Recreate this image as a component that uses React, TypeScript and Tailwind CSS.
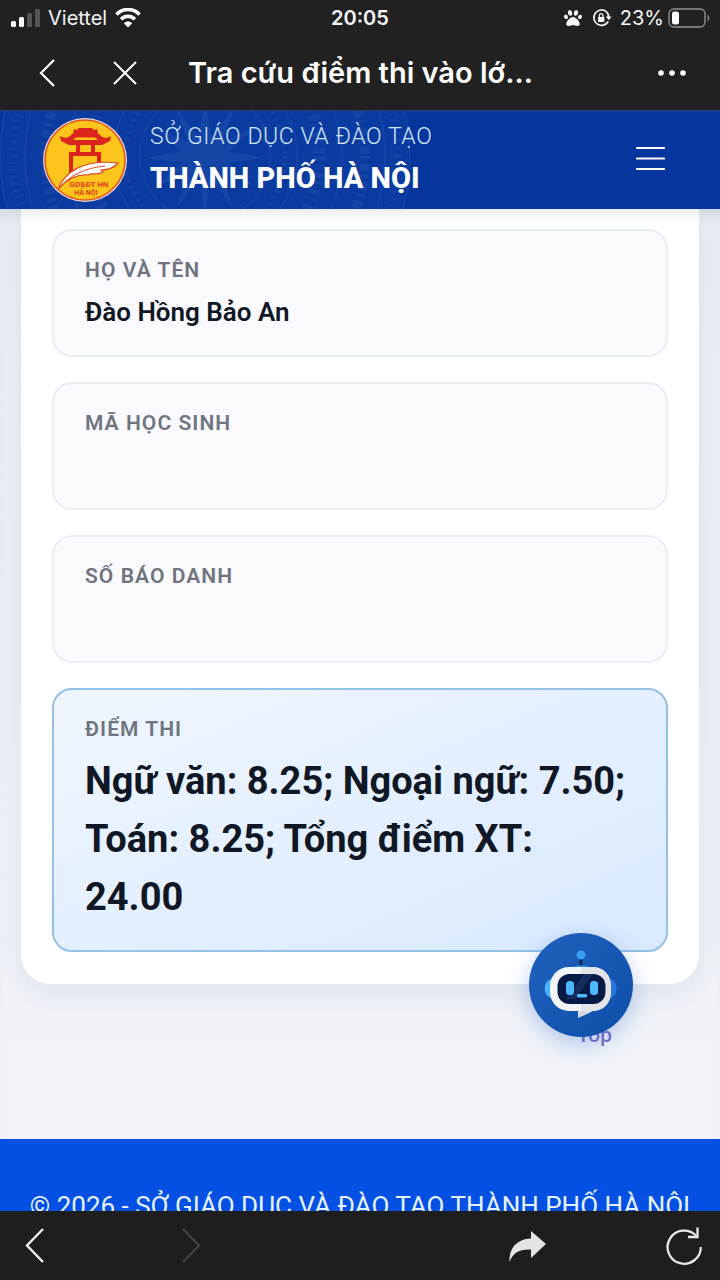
import type { ReactNode } from "react";
import { FaPaw } from "react-icons/fa";

const fields = [
  { label: "HỌ VÀ TÊN", value: "Đào Hồng Bảo An" },
  { label: "MÃ HỌC SINH", value: "" },
  { label: "SỐ BÁO DANH", value: "" },
];

function StatusBar() {
  return (
    <div className="grid h-9 shrink-0 grid-cols-3 items-center px-[10px] font-['Inter',sans-serif] text-xl text-gray-100">
      <div className="flex items-center gap-2">
        <svg width="30" height="20" viewBox="0 0 30 20" aria-hidden="true">
          <rect x="1" y="13" width="5" height="6" rx="1.5" fill="#fff" />
          <rect x="9" y="9" width="5" height="10" rx="1.5" fill="#fff" />
          <rect x="17" y="5" width="5" height="14" rx="1.5" fill="#555" />
          <rect x="25" y="1" width="5" height="18" rx="1.5" fill="#555" />
        </svg>
        <span>Viettel</span>
        <svg width="26" height="20" viewBox="0 0 26 20" fill="none" aria-hidden="true">
          <path d="M1.5 6.5C8 -0.2 18 -0.2 24.5 6.5" stroke="#fff" strokeWidth="3.6" />
          <path d="M6 11.2C10 7.2 16 7.2 20 11.2" stroke="#fff" strokeWidth="3.4" />
          <path d="M13 19.5L8.8 15.2C11 12.9 15 12.9 17.2 15.2Z" fill="#fff" />
        </svg>
      </div>
      <span className="text-center font-semibold">20:05</span>
      <div className="flex items-center justify-end gap-1">
        <FaPaw className="mr-1.5 size-[18px]" />
        <svg className="mr-1" width="20" height="20" viewBox="0 0 20 20" fill="none" stroke="#f3f4f6" aria-hidden="true">
          <path d="M14.3 3.6A7.7 7.7 0 1 0 16.2 13.5M14 3.4A7.7 7.7 0 0 1 16.7 9" strokeWidth="1.7" />
          <path d="M13.8 8.5H19.6L16.7 12.2Z" fill="#f3f4f6" stroke="none" />
          <rect x="6" y="9" width="6.4" height="5" rx="0.8" fill="#f3f4f6" stroke="none" />
          <path d="M7.4 9V7.4a1.8 1.8 0 0 1 3.6 0V9" strokeWidth="1.3" />
        </svg>
        <span>23%</span>
        <svg width="42" height="20" viewBox="0 0 42 20" aria-hidden="true">
          <rect x="1" y="1" width="36" height="18" rx="5" fill="none" stroke="#777" strokeWidth="1.8" />
          <rect x="4" y="3.5" width="7" height="13" rx="2.5" fill="#fff" />
          <path d="M39.5 6.5c2.6 1 2.6 6 0 7z" fill="#777" />
        </svg>
      </div>
    </div>
  );
}

function TitleBar() {
  return (
    <div className="flex h-[74px] shrink-0 items-center pr-[34px] pl-[39px]">
      <button type="button" aria-label="Quay lại" className="mr-[57px]">
        <svg width="17" height="28" viewBox="0 0 17 28" fill="none" stroke="#fff" strokeWidth="2.2">
          <path d="M15 1L2 14L15 27" />
        </svg>
      </button>
      <button type="button" aria-label="Đóng" className="mr-[51px]">
        <svg width="24" height="24" viewBox="0 0 24 24" fill="none" stroke="#fff" strokeWidth="2">
          <path d="M1 1L23 23M23 1L1 23" />
        </svg>
      </button>
      <h1 className="flex-1 truncate font-['Inter',sans-serif] text-[29px] font-semibold text-white">
        Tra cứu điểm thi vào lớ...
      </h1>
      <button type="button" aria-label="Thêm">
        <svg width="28" height="6" viewBox="0 0 28 6" fill="#fff">
          <circle cx="3" cy="3" r="2.8" />
          <circle cx="14" cy="3" r="2.8" />
          <circle cx="25" cy="3" r="2.8" />
        </svg>
      </button>
    </div>
  );
}

// Faint bronze drum behind the department name
function DrumPattern() {
  return (
    <svg
      className="absolute top-0 left-0 h-full w-[410px]"
      viewBox="0 0 410 98"
      fill="none"
      stroke="#6d95e0"
      strokeOpacity="0.1"
      aria-hidden="true"
    >
      <circle cx="205" cy="45" r="205" fill="#6d95e0" fillOpacity="0.06" strokeWidth="2" />
      <circle cx="205" cy="45" r="192" strokeWidth="8" strokeDasharray="2 5" />
      <circle cx="205" cy="45" r="180" strokeWidth="2" />
      <circle cx="205" cy="45" r="160" strokeWidth="10" strokeDasharray="3 5 7 4" />
      <circle cx="205" cy="45" r="137" strokeWidth="2" />
      <circle cx="205" cy="45" r="115" strokeWidth="12" strokeDasharray="5 4 2 6" />
      <circle cx="205" cy="45" r="92" strokeWidth="2" />
      <circle cx="205" cy="45" r="80" strokeWidth="5" strokeDasharray="3 4" />
      <circle cx="205" cy="45" r="65" strokeWidth="2" />
      <path
        d="M205 -10L211 27L234 -3L221 32L255 17L227 41L262 47L226 51L252 74L220 60L232 95L210 65L205 101L200 65L178 95L190 60L158 74L184 51L148 47L183 41L155 17L189 32L176 -3L199 27Z"
        fill="#6d95e0"
        fillOpacity="0.1"
      />
    </svg>
  );
}

function Emblem() {
  return (
    <svg width="84" height="84" viewBox="0 0 84 84" className="shrink-0" aria-hidden="true">
      <circle cx="42" cy="42" r="42" fill="#e9d7df" />
      <circle cx="42" cy="42" r="40" fill="#fdc51b" stroke="#e2571c" strokeWidth="1.6" />
      <g fill="#db251c">
        <path d="M30 16l1-5 3 1 2-2h13l2 2 3-1 1 5z" />
        <path d="M17 18c5 3 9 2 12-2h27c3 4 7 5 12 2l-1 5-8 4H26l-8-4z" />
        <path d="M33 26h4v8h-4zM48 26h4v8h-4z" />
        <path d="M26 34h32v11h-4v-7H30v20h-4z" />
      </g>
      <path d="M33 19.500h19l3 2.500H30z" fill="#fdc51b" />
      <path d="M15 71C22 54 40 41 75 45C70 51 63 52 58 52L60 54C54 58 49 54 45 57C35 56 25 60 15 71z" fill="#fff" stroke="#dd4a25" strokeWidth="1.2" />
      <path d="M15 71C27 57 42 50 62 48" fill="none" stroke="#dd4a25" strokeWidth="1" />
      <g fill="#dd3d1d" fontFamily="Roboto, sans-serif" fontWeight="700" textAnchor="middle">
        <text x="46" y="69" fontSize="8">GD&amp;ĐT HN</text>
        <text x="43" y="77" fontSize="7">HÀ NỘI</text>
      </g>
    </svg>
  );
}

function SiteHeader() {
  return (
    <header className="relative z-10 flex h-[99px] shrink-0 items-center overflow-hidden border-t border-[#34406b] bg-[#06369d] pr-[55px] pl-[43px]">
      <DrumPattern />
      <a href="#" className="relative flex flex-1 items-center gap-[23px]">
        <Emblem />
        <span className="flex flex-col pb-1">
          <span className="text-[23px] leading-10 font-light tracking-wide text-[#cfe6ff]">SỞ GIÁO DỤC VÀ ĐÀO TẠO</span>
          <span className="text-[29px] leading-[42px] font-extrabold text-white">THÀNH PHỐ HÀ NỘI</span>
        </span>
      </a>
      <button type="button" aria-label="Menu" className="pb-1">
        <svg width="29" height="25" viewBox="0 0 29 25" stroke="#fff" strokeWidth="2.2" strokeLinecap="round">
          <path d="M1 2h27M1 12.5h27M1 23h27" />
        </svg>
      </button>
    </header>
  );
}

function Field({ label, children }: { label: string; children: ReactNode }) {
  return (
    <div className="rounded-[20px] border-2 border-[#e9eef4] bg-[#f9f9fe] px-[31px] py-6">
      <dt className="text-[21px] leading-[30px] font-semibold tracking-wider text-[#70747e]">{label}</dt>
      <dd className="mt-2 min-h-[38px] text-[26px] leading-[38px] font-semibold text-[#101725]">{children}</dd>
    </div>
  );
}

function ChatBot() {
  return (
    <div className="fixed right-[87px] bottom-[243px] size-26">
      <a href="#" className="absolute right-[21px] -bottom-[10px] text-[21px] leading-6 font-medium text-[#7771c9]">
        Top
      </a>
      <button
        type="button"
        aria-label="Trợ lý ảo"
        className="relative flex size-26 items-center justify-center rounded-full bg-linear-to-br from-[#1f62bd] to-[#0c4eaa] shadow-[0_6px_22px_rgba(30,90,210,0.3)]"
      >
        <svg width="104" height="104" viewBox="0 0 104 104" aria-hidden="true">
          <path d="M52 24v12" stroke="#082554" strokeWidth="3" />
          <circle cx="52" cy="22" r="4.5" fill="#3a9cf2" />
          <path d="M43 36c1-5 17-5 18 0z" fill="#2f8ce8" />
          <path d="M24 46c-11 0-11 19 0 19z" fill="#49b4fb" />
          <path d="M80 46c10 0 10 19 0 19z" fill="#2c76e0" />
          <path d="M49 73h22c-8 6-15 9-22 12z" fill="#d7dce4" />
          <rect x="21" y="34" width="61" height="44" rx="19" fill="#f3f4f7" />
          <path d="M52 34h11c12 0 19 8 19 19v6c0 12-8 19-19 19H52z" fill="#e3e4e9" />
          <rect x="28.500" y="41" width="48" height="30" rx="12" fill="#071a46" />
          <path d="M55 41h9L46 66h-9z" fill="#203e70" opacity="0.5" />
          <rect x="37" y="48" width="8" height="14" rx="3.500" fill="#4abaff" />
          <rect x="61" y="48" width="8" height="14" rx="3.500" fill="#4abaff" />
          <rect x="48" y="61" width="10" height="3.500" rx="1" fill="#4abaff" />
        </svg>
      </button>
    </div>
  );
}

function BottomBar() {
  return (
    <nav className="flex h-[69px] shrink-0 items-center bg-[#1e1e1e] pr-[17px] pl-[25px]">
      <button type="button" aria-label="Trang trước">
        <svg width="19" height="35" viewBox="0 0 19 35" fill="none" stroke="#f0f0f0" strokeWidth="2.4">
          <path d="M18 1L2 17.500L18 34" />
        </svg>
      </button>
      <button type="button" aria-label="Trang sau" disabled className="ml-[138px]">
        <svg width="19" height="35" viewBox="0 0 19 35" fill="none" stroke="#414141" strokeWidth="2.4">
          <path d="M1 1L17 17.500L1 34" />
        </svg>
      </button>
      <button type="button" aria-label="Chia sẻ" className="mr-[120px] ml-auto">
        <svg width="37" height="32" viewBox="0 0 37 32" fill="#e4e4e4">
          <path d="M22 1L37 14L22 28V19.500C10 19 4 23 0.500 32C0 17 9 9 22 8.500Z" />
        </svg>
      </button>
      <button type="button" aria-label="Tải lại">
        <svg width="37" height="38" viewBox="0 0 37 38" fill="none" stroke="#e8e8e8" strokeWidth="2.3">
          <path d="M34.800 20A16.600 16.600 0 1 1 30 8.500" />
          <path d="M31.500 0.500V10H22" />
        </svg>
      </button>
    </nav>
  );
}

export default function App() {
  return (
    <div className="flex h-screen flex-col bg-[#212121] font-['Roboto',sans-serif]">
      <StatusBar />
      <TitleBar />
      <SiteHeader />
      <div className="min-h-0 flex-1 overflow-y-auto bg-[#eef2f7] [scrollbar-width:none]">
        <main className="bg-linear-to-b from-[#e9eef3] to-[#f0f3f8] px-[21px] pb-[155px] shadow-[inset_0_12px_12px_-6px_rgba(30,50,90,0.12)]">
          <dl className="flex flex-col gap-[25px] rounded-b-[30px] bg-white px-[31px] pt-5 pb-8 shadow-[0_10px_32px_rgba(30,50,80,0.07),inset_0_12px_12px_-8px_rgba(30,50,90,0.12)]">
            {fields.map((field) => (
              <Field key={field.label} label={field.label}>
                {field.value}
              </Field>
            ))}
            <div className="rounded-[20px] border-2 border-[#93c1e8] bg-linear-to-br from-[#eff6ff] to-[#d9e9fe] px-[31px] py-6">
              <dt className="text-[21px] leading-[30px] font-semibold tracking-wider text-[#70747e]">ĐIỂM THI</dt>
              <dd className="mt-2 text-[38px] leading-[58px] font-bold text-[#101725]">
                Ngữ văn: 8.25; Ngoại ngữ: 7.50; Toán: 8.25; Tổng điểm XT: 24.00
              </dd>
            </div>
          </dl>
        </main>
        <footer className="flex h-[120px] justify-center bg-[#0350e2] pt-[51px] text-[26px] leading-8 whitespace-nowrap text-[#e6f3ff]">
          © 2026 - SỞ GIÁO DỤC VÀ ĐÀO TẠO THÀNH PHỐ HÀ NỘI
        </footer>
      </div>
      <BottomBar />
      <ChatBot />
    </div>
  );
}
